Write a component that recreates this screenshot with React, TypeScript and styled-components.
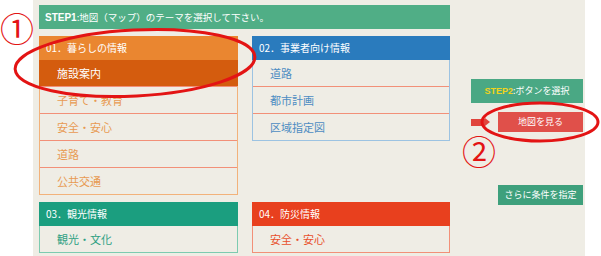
import React from 'react';
import styled, { createGlobalStyle } from 'styled-components';

const GlobalStyle = createGlobalStyle`
  html, body {
    margin: 0;
    padding: 0;
    background: #ffffff;
  }
  body {
    font-family: 'Noto Sans CJK JP', 'Noto Sans', sans-serif;
  }
`;

type Tone = {
  head: string;
  text: string;
  border: string;
};

const tones: Record<string, Tone> = {
  orange: { head: '#ea8630', text: '#e89a52', border: '#f2b27a' },
  blue: { head: '#2a7bbd', text: '#4d8cc2', border: '#9cc3e2' },
  teal: { head: '#1b9e7f', text: '#2ea083', border: '#7ccbb0' },
  red: { head: '#e8401e', text: '#e8502c', border: '#f29078' },
};

const Page = styled.div`
  position: relative;
  width: 601px;
  height: 256px;
  padding-left: 33px;
  box-sizing: border-box;
`;

const Panel = styled.div`
  width: 552px;
  height: 256px;
  background: #efede5;
  box-sizing: border-box;
  padding: 5px 0 0 6px;
  display: flex;
  gap: 21px;
`;

const LeftArea = styled.div`
  width: 411px;
  display: flex;
  flex-direction: column;
  gap: 7px;
`;

const StepBar = styled.div`
  height: 24px;
  background: #50ae86;
  color: #ffffff;
  font-size: 9.5px;
  line-height: 24px;
  padding-left: 6px;
  b {
    font-family: 'Liberation Sans', sans-serif;
    font-weight: bold;
    font-size: 10px;
  }
`;

const Grid = styled.div`
  display: grid;
  grid-template-columns: 199px 198px;
  column-gap: 14px;
  row-gap: 7px;
  align-items: start;
`;

const Column = styled.div<{ $tone: Tone }>`
  border: 1px solid ${p => p.$tone.border};
  border-top: none;
`;

const Head = styled.div<{ $tone: Tone }>`
  height: 24px;
  margin: 0 -1px;
  background: ${p => p.$tone.head};
  color: #ffffff;
  font-size: 10px;
  line-height: 24px;
  padding-left: 7px;
`;

const Item = styled.div<{ $tone: Tone; $active?: boolean }>`
  height: 26px;
  line-height: 26px;
  font-size: 11px;
  color: ${p => (p.$active ? '#ffffff' : p.$tone.text)};
  background: ${p => (p.$active ? '#d45c0e' : 'transparent')};
  margin: ${p => (p.$active ? '0 -1px' : '0')};
  padding-left: ${p => (p.$active ? '18px' : '17px')};
  & + & {
    border-top: 1px solid ${p => p.$tone.border};
  }
`;

const RightArea = styled.div`
  width: 112px;
  padding-top: 74px;
  display: flex;
  flex-direction: column;
`;

const Step2 = styled.div`
  height: 24px;
  background: #4aa884;
  color: #ffffff;
  font-size: 9px;
  line-height: 24px;
  text-align: center;
  span {
    color: #f2d31c;
    font-family: 'Liberation Sans', sans-serif;
    font-weight: bold;
  }
`;

const ArrowRow = styled.div`
  margin-top: 9px;
  display: flex;
  align-items: center;
  height: 20px;
`;

const Arrow = styled.div`
  display: flex;
  align-items: center;
  width: 27px;
  &::before {
    content: '';
    width: 14px;
    height: 7px;
    background: #e0443c;
  }
  &::after {
    content: '';
    border-left: 5px solid #e0443c;
    border-top: 4px solid transparent;
    border-bottom: 4px solid transparent;
  }
`;

const Button = styled.div<{ $bg: string }>`
  width: 85px;
  height: 20px;
  line-height: 20px;
  background: ${p => p.$bg};
  color: #ffffff;
  font-size: 9px;
  text-align: center;
`;

const MoreRow = styled.div`
  margin-top: 53px;
  display: flex;
  justify-content: flex-end;
`;

const Overlay = styled.svg`
  position: absolute;
  left: 0;
  top: 0;
  pointer-events: none;
`;

const Mark = styled.div<{ $x: number; $y: number }>`
  position: absolute;
  left: ${p => p.$x}px;
  top: ${p => p.$y}px;
  color: #e31414;
  font-size: 34px;
  line-height: 34px;
  font-family: 'Noto Sans CJK JP', sans-serif;
`;

const groups = [
  { tone: tones.orange, title: '01．暮らしの情報', items: ['施設案内', '子育て・教育', '安全・安心', '道路', '公共交通'], active: 0 },
  { tone: tones.blue, title: '02．事業者向け情報', items: ['道路', '都市計画', '区域指定図'], active: -1 },
  { tone: tones.teal, title: '03．観光情報', items: ['観光・文化'], active: -1 },
  { tone: tones.red, title: '04．防災情報', items: ['安全・安心'], active: -1 },
];

export default function App() {
  return (
    <>
      <GlobalStyle />
      <Page>
        <Panel>
          <LeftArea>
            <StepBar>
              <b>STEP1</b>:地図（マップ）のテーマを選択して下さい。
            </StepBar>
            <Grid>
              {groups.map(g => (
                <Column key={g.title} $tone={g.tone}>
                  <Head $tone={g.tone}>{g.title}</Head>
                  {g.items.map((it, i) => (
                    <Item key={it} $tone={g.tone} $active={i === g.active}>
                      {it}
                    </Item>
                  ))}
                </Column>
              ))}
            </Grid>
          </LeftArea>
          <RightArea>
            <Step2>
              <span>STEP2</span>:ボタンを選択
            </Step2>
            <ArrowRow>
              <Arrow />
              <Button $bg="#e0504a">地図を見る</Button>
            </ArrowRow>
            <MoreRow>
              <Button $bg="#3ea07c">さらに条件を指定</Button>
            </MoreRow>
          </RightArea>
        </Panel>
        <Overlay width="601" height="256" viewBox="0 0 601 256">
          <ellipse cx="135" cy="63" rx="120" ry="33" fill="none" stroke="#e31414" strokeWidth="3" transform="rotate(-3 135 63)" />
          <ellipse cx="540" cy="122" rx="58" ry="19" fill="none" stroke="#e31414" strokeWidth="3" />
        </Overlay>
        <Mark $x={0} $y={11}>①</Mark>
        <Mark $x={462} $y={134}>②</Mark>
      </Page>
    </>
  );
}
